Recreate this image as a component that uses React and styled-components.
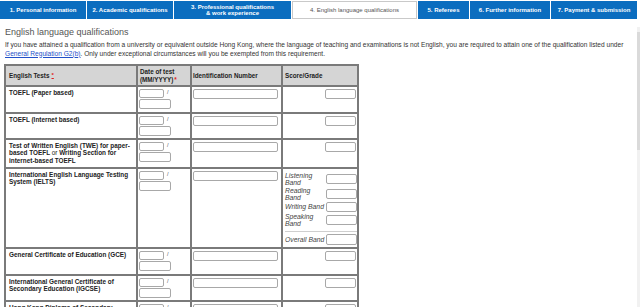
import styled, { createGlobalStyle } from "styled-components";

const GlobalStyle = createGlobalStyle`
  html, body {
    margin: 0;
    padding: 0;
    overflow: hidden;
    background: #fff;
  }
  body {
    font-family: "Liberation Sans", Arial, sans-serif;
    color: #222;
  }
`;

const Page = styled.div`
  width: 640px;
  height: 307px;
  overflow: hidden;
`;

const TabBar = styled.nav`
  display: flex;
  gap: 1px;
  padding-top: 1px;
`;

const Tab = styled.div`
  flex: 0 0 ${(p) => p.$w}px;
  height: 18px;
  box-sizing: border-box;
  display: flex;
  align-items: center;
  justify-content: center;
  text-align: center;
  font-size: 6px;
  line-height: 6.5px;
  font-weight: ${(p) => (p.$active ? "normal" : "bold")};
  background: ${(p) => (p.$active ? "#fff" : "#0b6dbf")};
  color: ${(p) => (p.$active ? "#555" : "#fff")};
  border: 1px solid ${(p) => (p.$active ? "#c9c9c9" : "#0b6dbf")};
`;

const Body = styled.div`
  display: flex;
`;

const Main = styled.main`
  flex: 1;
  padding-left: 4px;
`;

const ScrollTrack = styled.div`
  width: 3px;
  margin-top: 8px;
  height: 290px;
  background: #f1f1f1;
  display: flex;
  flex-direction: column;
`;

const ScrollThumb = styled.div`
  margin-top: 5px;
  height: 118px;
  background: #dadada;
`;

const Heading = styled.h2`
  margin: 8px 0 0 1px;
  font-size: 9px;
  line-height: 11px;
  font-weight: normal;
  color: #555;
`;

const Intro = styled.p`
  margin: 3px 0 0 1px;
  font-size: 6.6px;
  line-height: 8.5px;
  color: #333;
`;

const RegLink = styled.a`
  color: #2250c8;
  text-decoration: underline;
`;

const Grid = styled.table`
  margin-top: 6px;
  border-collapse: separate;
  border-spacing: 0;
  border: 1px solid #7a7a7a;
  table-layout: fixed;
  width: 355px;
`;

const Th = styled.th`
  box-sizing: border-box;
  width: ${(p) => p.$w}px;
  height: 21px;
  background: #d5d5d5;
  border: 1px solid #7a7a7a;
  padding: 0 2px 0 ${(p) => p.$pl ?? 2}px;
  font-size: 6.3px;
  line-height: 7.8px;
  font-weight: bold;
  text-align: left;
  vertical-align: middle;
  color: #222;
`;

const Td = styled.td`
  box-sizing: border-box;
  border: 1px solid #7a7a7a;
  vertical-align: top;
  padding: 2px 1px 2.5px ${(p) => p.$pl ?? 1}px;
  text-align: ${(p) => (p.$right ? "right" : "left")};
  font-size: 6.4px;
  line-height: 7.4px;
  color: #222;
`;

const TestName = styled.div`
  font-weight: bold;
`;

const Plain = styled.span`
  font-weight: normal;
`;

const Req = styled.span`
  color: #e02020;
  margin-left: 1px;
`;

const ReqMark = styled.span`
  color: #e02020;
  margin-left: 2px;
  font-size: 6px;
  text-decoration: underline;
  vertical-align: 1px;
`;

const Field = styled.input`
  box-sizing: border-box;
  display: block;
  width: ${(p) => p.$w}px;
  height: ${(p) => p.$h ?? 10}px;
  margin: ${(p) => (p.$right ? "0 0 0 auto" : "0")};
  padding: 0;
  border: 1px solid #a8a8a8;
  border-radius: 2px;
  background: #fff;
`;

const DateStack = styled.div`
  display: flex;
  flex-direction: column;
  gap: 1px;
`;

const DateLine = styled.div`
  display: flex;
  align-items: flex-start;
`;

const Slash = styled.span`
  margin-left: 3px;
  font-size: 5.5px;
  line-height: 7px;
  color: #555;
`;

const BandList = styled.div`
  display: grid;
  grid-template-columns: 42px 1fr;
  align-items: center;
  row-gap: 1px;
  padding-top: 1px;
`;

const BandLabel = styled.div`
  font-style: italic;
  font-size: 6.8px;
  line-height: 7px;
  color: #444;
  text-align: left;
  padding-left: 1px;
`;

const BandRule = styled.div`
  grid-column: 1 / -1;
  height: 1px;
  background: #cfcfcf;
  margin: 3px 0 1px 1px;
`;

const tabs = [
  { w: 86, label: "1. Personal information" },
  { w: 86, label: "2. Academic qualifications" },
  { w: 117, label: <>3. Professional qualifications<br />&amp; work experience</> },
  { w: 125, label: "4. English language qualifications", active: true },
  { w: 51, label: "5. Referees" },
  { w: 80, label: "6. Further information" },
  { w: 86, label: "7. Payment & submission" },
];

const tests = [
  { name: "TOEFL (Paper based)" },
  { name: "TOEFL (Internet based)" },
  {
    name: (
      <>
        Test of Written English (TWE) for paper-<br />based TOEFL <Plain>or</Plain> Writing Section for<br />
        internet-based TOEFL
      </>
    ),
  },
  { name: <>International English Language Testing<br />System (IELTS)</>, bands: true },
  { name: "General Certificate of Education (GCE)" },
  { name: <>International General Certificate of<br />Secondary Education (IGCSE)</> },
  { name: <>Hong Kong Diploma of Secondary<br />Education (HKDSE)</> },
  { name: "Others" },
];

const bands = ["Listening Band", "Reading Band", "Writing Band", "Speaking Band"];

const DateInputs = () => (
  <DateStack>
    <DateLine>
      <Field $w={25} $h={9} />
      <Slash>/</Slash>
    </DateLine>
    <Field $w={32} $h={10} />
  </DateStack>
);

const Bands = () => (
  <BandList>
    {bands.map((b) => [
      <BandLabel key={b}>{b}</BandLabel>,
      <Field key={b + "-f"} $w={31} $h={10} $right />,
    ])}
    <BandRule />
    <BandLabel>Overall Band</BandLabel>
    <Field $w={31} $h={11} $right />
  </BandList>
);

const App = () => {
  return (
    <Page>
      <GlobalStyle />
      <TabBar>
        {tabs.map((t, i) => (
          <Tab key={i} $w={t.w} $active={t.active}>
            {t.label}
          </Tab>
        ))}
      </TabBar>
      <Body>
        <Main>
          <Heading>English language qualifications</Heading>
          <Intro>
            If you have attained a qualification from a university or equivalent outside Hong Kong,
            where the language of teaching and examinations is not English, you are required to attain
            one of the qualification listed under <RegLink href="#">General Regulation G2(b)</RegLink>.
            Only under exceptional circumstances will you be exempted from this requirement.
          </Intro>
          <Grid>
            <thead>
              <tr>
                <Th $w={132} $pl={3}>
                  English Tests<ReqMark>*</ReqMark>
                </Th>
                <Th $w={54}>
                  Date of test
                  <br />
                  (MM/YYYY)<Req>*</Req>
                </Th>
                <Th $w={91} $pl={1}>Identification Number</Th>
                <Th $w={76}>Score/Grade</Th>
              </tr>
            </thead>
            <tbody>
              {tests.map((t, i) => (
                <tr key={i}>
                  <Td $pl={3}>
                    <TestName>{t.name}</TestName>
                  </Td>
                  <Td $pl={1}>
                    <DateInputs />
                  </Td>
                  <Td $pl={1}>
                    <Field $w={85} $h={10} />
                  </Td>
                  <Td $right>{t.bands ? <Bands /> : <Field $w={31} $h={10} $right />}</Td>
                </tr>
              ))}
            </tbody>
          </Grid>
        </Main>
        <ScrollTrack>
          <ScrollThumb />
        </ScrollTrack>
      </Body>
    </Page>
  );
};

export default App;
